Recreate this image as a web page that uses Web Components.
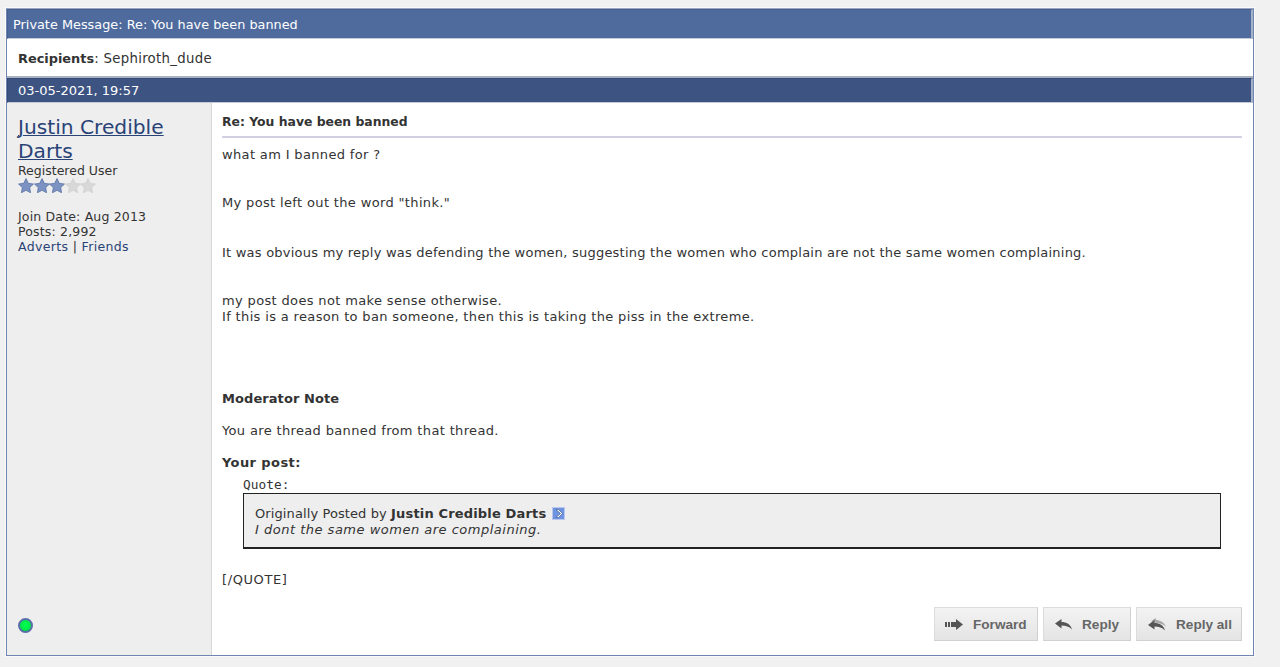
<!DOCTYPE html>
<html>
<head>
<meta charset="utf-8">
<title>Private Message</title>
<style>
    html, body { margin: 0; height: 100%; background: #f1f1f1; }
    body { font: 13px "DejaVu Sans", Verdana, sans-serif; color: #333; overflow: hidden; }
</style>
</head>
<body>
<pm-page>
    <pm-titlebar slot="head">Private Message: Re: You have been banned</pm-titlebar>
    <pm-recipients slot="head"><b>Recipients</b><span>: Sephiroth_dude</span></pm-recipients>
    <pm-datebar slot="head">03-05-2021, 19:57</pm-datebar>
    <pm-userinfo slot="side"></pm-userinfo>
    <pm-post></pm-post>
</pm-page>

<script>
class PmPage extends HTMLElement {
    constructor() {
        super();
        this.attachShadow({ mode: 'open' });
        this.shadowRoot.innerHTML = `
            <style>
                :host {
                    display: flex;
                    flex-direction: column;
                    box-sizing: border-box;
                    width: 1248px;
                    height: 648px;
                    margin: 8px 0 0 6px;
                    background: white;
                    border: 1px solid #6f86b2;
                    border-top-color: #9aa6c0;
                    box-shadow: 0 0 0 1px #fafafa;
                }
                .body { display: flex; flex: 1; min-height: 0; }
            </style>
            <slot name="head"></slot>
            <div class="body">
                <slot name="side"></slot>
                <slot></slot>
            </div>
        `;
    }
}

class PmTitlebar extends HTMLElement {
    constructor() {
        super();
        this.attachShadow({ mode: 'open' });
        this.shadowRoot.innerHTML = `
            <style>
                :host {
                    display: block;
                    box-sizing: border-box;
                    height: 30px;
                    line-height: 29px;
                    padding-left: 5px;
                    background: #4f6b9e;
                    border: 1px solid #46608f;
                    border-right: 2px solid #a4b0c8;
                    border-bottom: 1px solid #c4cad6;
                    color: #fff;
                    font-size: 12.8px;
                    letter-spacing: .03px;
                }
            </style>
            <slot></slot>
        `;
    }
}

class PmRecipients extends HTMLElement {
    constructor() {
        super();
        this.attachShadow({ mode: 'open' });
        this.shadowRoot.innerHTML = `
            <style>
                :host {
                    display: block;
                    box-sizing: border-box;
                    height: 39px;
                    line-height: 40px;
                    padding-left: 11px;
                    background: #fff;
                    border-bottom: 2px solid #a9b0be;
                    font-size: 13.3px;
                }
                ::slotted(b) { font-size: 12.9px; }
                ::slotted(span) { letter-spacing: .3px; }
            </style>
            <slot></slot>
        `;
    }
}

class PmDatebar extends HTMLElement {
    constructor() {
        super();
        this.attachShadow({ mode: 'open' });
        this.shadowRoot.innerHTML = `
            <style>
                :host {
                    display: block;
                    box-sizing: border-box;
                    height: 25px;
                    line-height: 24px;
                    padding-left: 10px;
                    background: #3d5483;
                    border: 1px solid #354a76;
                    border-right: 2px solid #a4b0c8;
                    border-bottom: 1px solid #c4cad6;
                    color: #fff;
                    font-size: 13px;
                }
            </style>
            <slot></slot>
        `;
    }
}

class PmUserinfo extends HTMLElement {
    constructor() {
        super();
        this.attachShadow({ mode: 'open' });
        const star = (fill, edge) => `<svg width="16" height="15" viewBox="0 0 16 15"><path d="M8 .5l2.3 4.8 5.2.7-3.8 3.6.9 5.2L8 12.3l-4.600 2.500.9-5.200L.5 6l5.200-.7z" fill="${fill}" stroke="${edge}" stroke-width=".7"/></svg>`;
        const on = star('#7b92c2', '#5069a0');
        const off = star('#d8d8d8', '#cfcfcf');
        this.shadowRoot.innerHTML = `
            <style>
                :host {
                    display: flex;
                    flex-direction: column;
                    box-sizing: border-box;
                    width: 205px;
                    flex: none;
                    padding: 12px 10px 22px 11px;
                    background: #eee;
                    border-right: 1px solid #d8d8d8;
                    font-size: 12.5px;
                    line-height: 15px;
                }
                a { color: #2a4377; text-decoration: none; }
                .name {
                    font-size: 20.2px;
                    line-height: 24px;
                    text-decoration: underline;
                    text-decoration-thickness: 1px;
                }
                .stars { display: flex; height: 15px; }
                .stars svg { flex: none; }
                .stars svg + svg { margin-left: -.5px; }
                .stats { margin-top: 16px; letter-spacing: .17px; }
                .links { letter-spacing: .35px; }
                .status {
                    margin-top: auto;
                    width: 15px;
                    height: 15px;
                    box-sizing: border-box;
                    border-radius: 50%;
                    border: 2px solid #5a6eaa;
                    background: radial-gradient(circle at 50% 45%, #00ff50 0, #00e848 65%, #058a34 100%);
                }
            </style>
            <a class="name" href="#">Justin Credible Darts</a>
            <div>Registered User</div>
            <div class="stars">${on}${on}${on}${off}${off}</div>
            <div class="stats">
                <div>Join Date: Aug 2013</div>
                <div>Posts: 2,992</div>
                <div class="links"><a href="#">Adverts</a> | <a href="#">Friends</a></div>
            </div>
            <div class="status"></div>
        `;
    }
}

class PmButton extends HTMLElement {
    constructor() {
        super();
        this.attachShadow({ mode: 'open' });
        this.shadowRoot.innerHTML = `
            <style>
                :host {
                    display: flex;
                    align-items: center;
                    gap: 10px;
                    box-sizing: border-box;
                    height: 34px;
                    padding-left: 10px;
                    background: linear-gradient(#f3f3f3, #e4e4e4);
                    border: 1px solid #dcdcdc;
                    border-right-color: #d0d0d0;
                    border-bottom-color: #d0d0d0;
                    color: #666;
                    font: bold 13.6px "Liberation Sans", Arial, sans-serif;
                }
                ::slotted(svg) { flex: none; }
            </style>
            <slot></slot>
        `;
    }
}

class PmPost extends HTMLElement {
    constructor() {
        super();
        this.attachShadow({ mode: 'open' });
        this.shadowRoot.innerHTML = `
            <style>
                :host {
                    display: flex;
                    flex-direction: column;
                    flex: 1;
                    min-width: 0;
                    box-sizing: border-box;
                    padding: 11px 11px 14px 10px;
                    font-size: 13px;
                    line-height: 16px;
                }
                h2 {
                    margin: 0;
                    font-size: 12.4px;
                    line-height: 16px;
                    padding-bottom: 6px;
                    border-bottom: 2px solid #d0d0e2;
                    color: #333;
                }
                p { margin: 0; }
                .msg { margin-top: 9px; letter-spacing: .35px; }
                .msg b { letter-spacing: .07px; }
                .quote-label {
                    font: 12.8px "DejaVu Sans Mono", monospace;
                    margin: 7px 0 0 21px;
                    line-height: 14px;
                    letter-spacing: .05px;
                }
                .quote {
                    margin: 1px 21px 0 21px;
                    box-sizing: border-box;
                    height: 56px;
                    padding: 12px 10px 0 11px;
                    background: #eee;
                    border: 1px solid #222;
                    border-bottom-width: 2px;
                    letter-spacing: .1px;
                }
                .quote b { letter-spacing: .16px; }
                .quote i { letter-spacing: .5px; }
                .quote svg { vertical-align: -2px; margin-left: 1px; }
                .actions {
                    display: flex;
                    justify-content: flex-end;
                    gap: 5px;
                    margin-top: auto;
                }
                .w1 { width: 104px; }
                .w2 { width: 88px; padding-left: 11px; }
                .w3 { width: 106px; padding-left: 11px; }
            </style>
            <h2>Re: You have been banned</h2>
            <div class="msg">
                <p>what am I banned for ?</p>
                <p style="margin-top:32px">My post left out the word "think."</p>
                <p style="margin-top:34px;letter-spacing:.23px">It was obvious my reply was defending the women, suggesting the women who complain are not the same women complaining.</p>
                <p style="margin-top:32px">my post does not make sense otherwise.<br>If this is a reason to ban someone, then this is taking the piss in the extreme.</p>
                <p style="margin-top:66px"><b>Moderator Note</b></p>
                <p style="margin-top:16px">You are thread banned from that thread.</p>
                <p style="margin-top:16px"><b style="letter-spacing:.4px">Your post:</b></p>
            </div>
            <div class="quote-label">Quote:</div>
            <div class="quote">
                Originally Posted by <b>Justin Credible Darts</b>
                <svg width="13" height="13" viewBox="0 0 13 13"><rect width="13" height="13" fill="#6f93de"/><rect x=".5" y=".5" width="12" height="12" fill="none" stroke="#b8c8ee"/><path d="M4 2.5L8.5 6.5 4 10.5h2.5L10.5 6.5 6.5 2.5z" fill="#fff" stroke="#33518f" stroke-width=".6"/></svg><br>
                <i>I dont the same women are complaining.</i>
            </div>
            <p style="margin-top:23px;letter-spacing:.6px">[/QUOTE]</p>
            <div class="actions">
                <pm-button class="w1">
                    <svg width="18" height="11" viewBox="0 0 18 11"><path d="M0 3h2v5H0zM3 3h2v5H3zM6 3h5V0l7 5.5-7 5.5V8H6z" fill="#555"/></svg>Forward
                </pm-button>
                <pm-button class="w2">
                    <svg width="17" height="11" viewBox="0 0 17 11"><path d="M0 4.5L6.500 0v3c5 0 9 2 10.500 7.500C14 7.500 11 6.500 6.500 6.500V9.500z" fill="#555"/></svg>Reply
                </pm-button>
                <pm-button class="w3">
                    <svg width="18" height="13" viewBox="0 0 18 13"><path d="M3 3L8 0v2c4 0 8 2 10 7-3-3-6-4-10-4z" fill="#aaa"/><path d="M0 7l6.500-5v3c5 0 9 2 10.500 7.500-3-3-6-4-10.500-4v3z" fill="#555"/></svg>Reply all
                </pm-button>
            </div>
        `;
    }
}

customElements.define('pm-page', PmPage);
customElements.define('pm-titlebar', PmTitlebar);
customElements.define('pm-recipients', PmRecipients);
customElements.define('pm-datebar', PmDatebar);
customElements.define('pm-userinfo', PmUserinfo);
customElements.define('pm-button', PmButton);
customElements.define('pm-post', PmPost);
</script>
</body>
</html>
